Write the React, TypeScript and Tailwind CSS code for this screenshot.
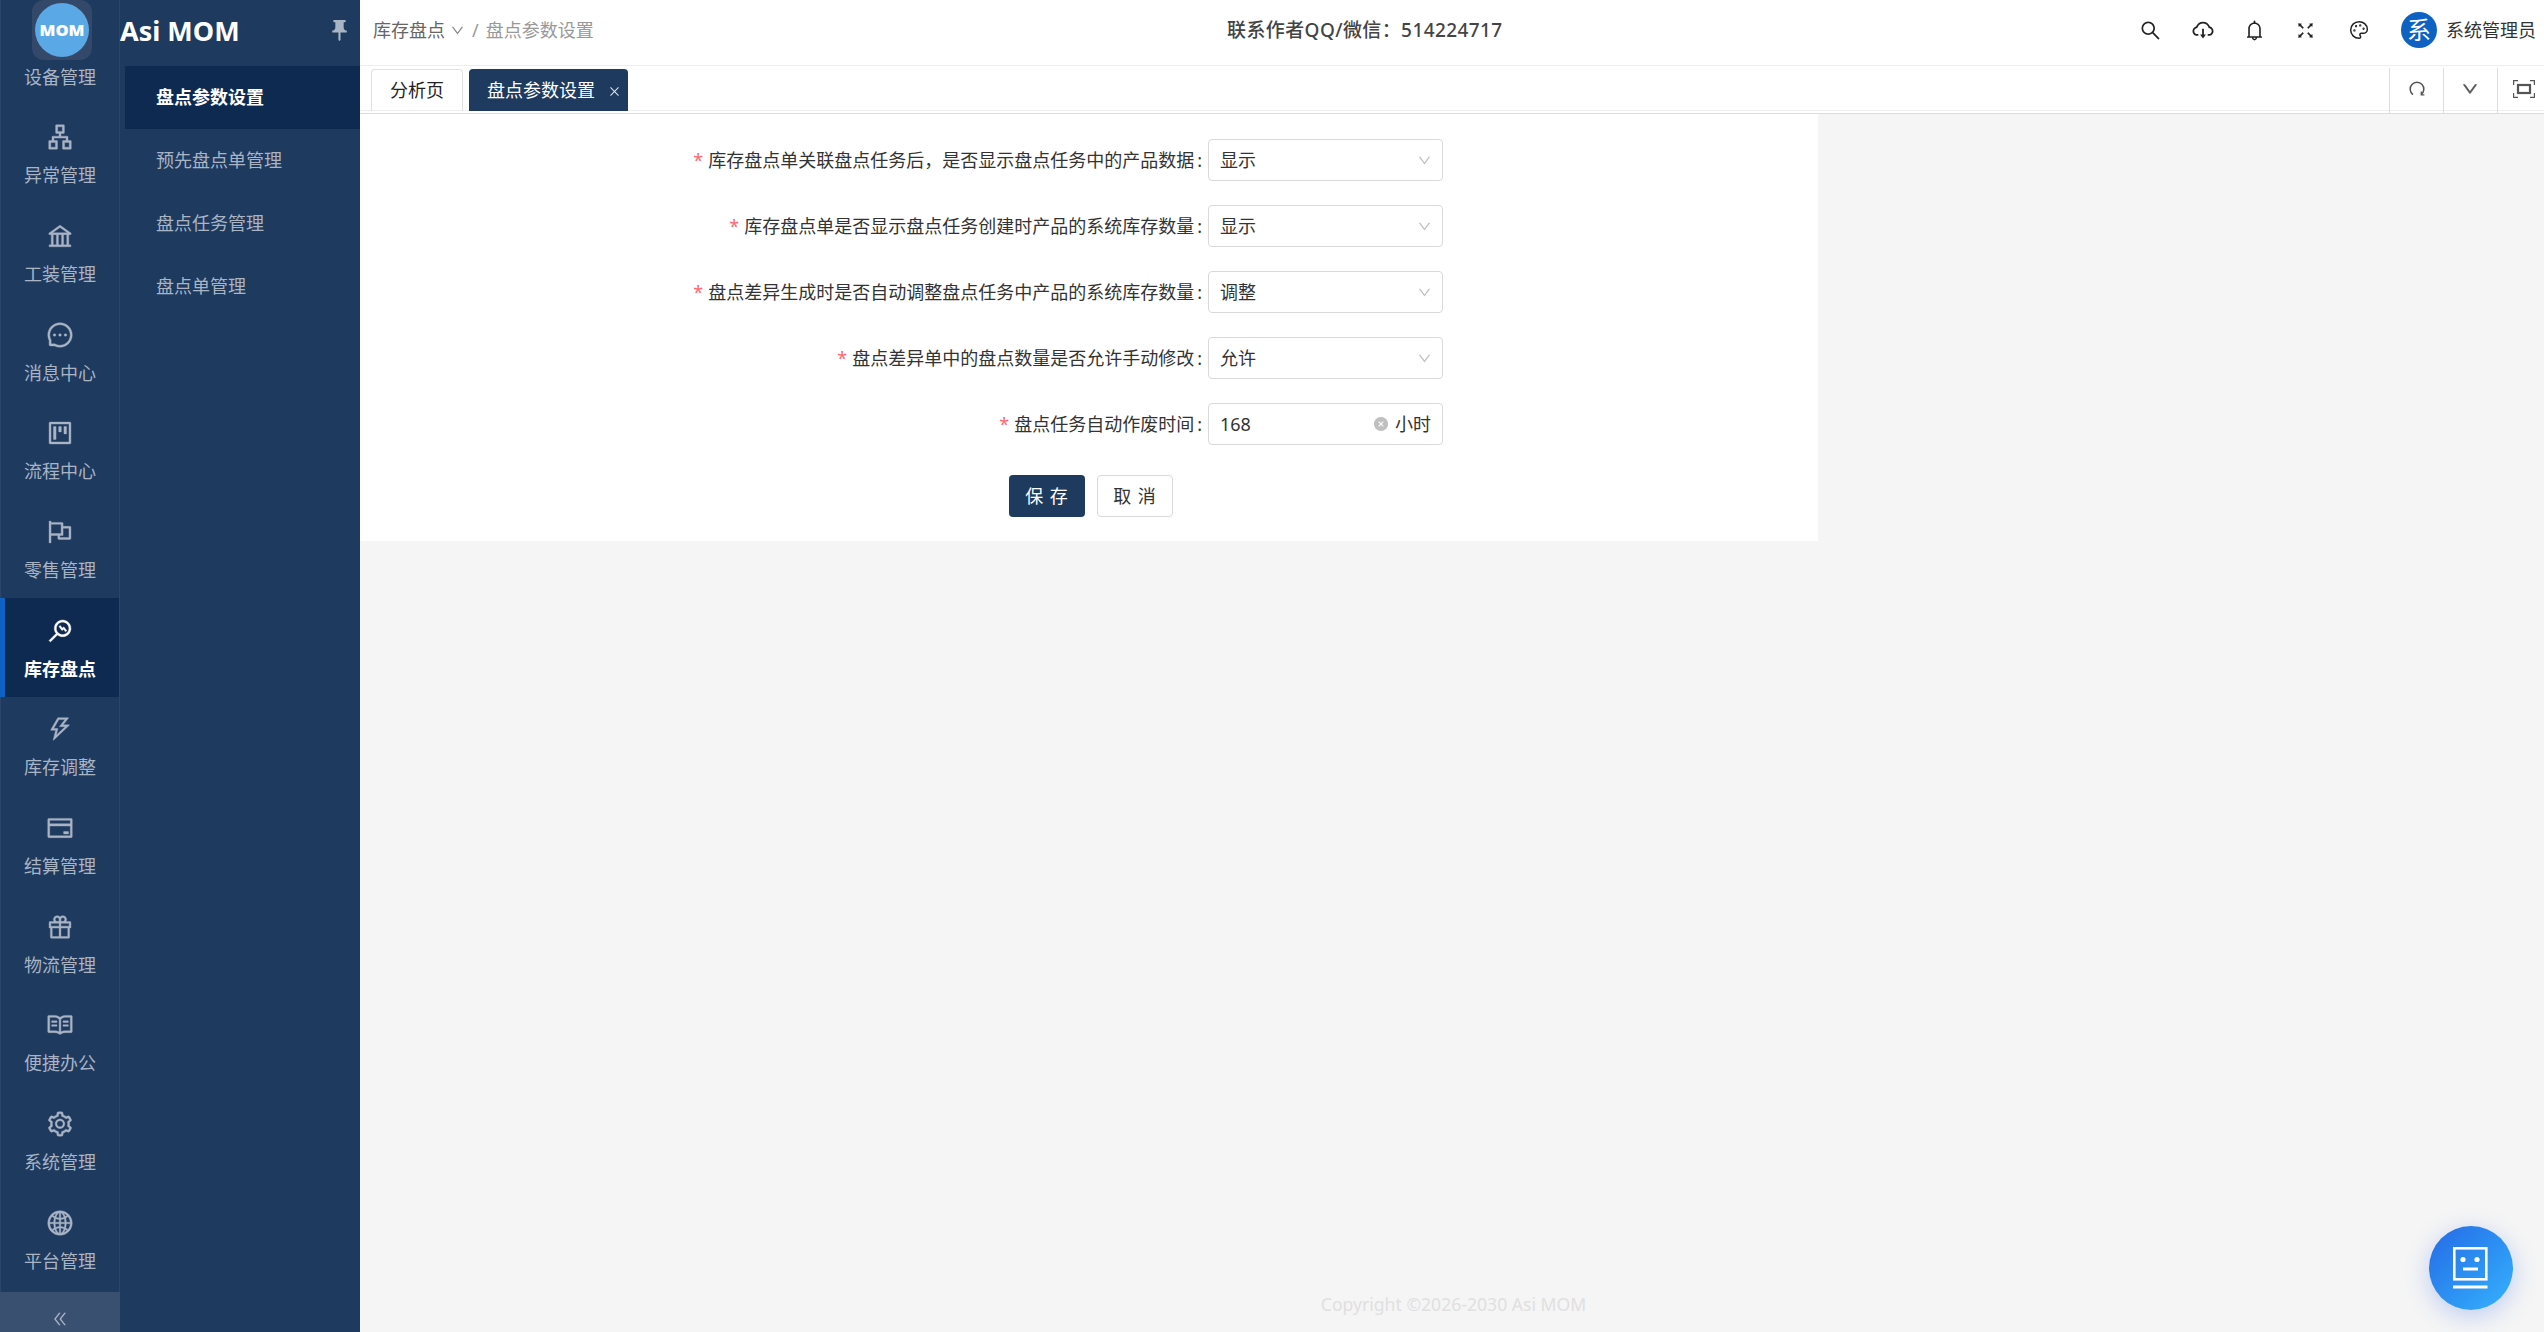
import { Palette } from 'lucide-react'
import {
  AiOutlineApartment,
  AiOutlineBank,
  AiOutlineBell,
  AiOutlineClose,
  AiOutlineCloudDownload,
  AiOutlineCreditCard,
  AiOutlineDoubleLeft,
  AiOutlineDown,
  AiOutlineFlag,
  AiOutlineFullscreen,
  AiOutlineGift,
  AiOutlineGlobal,
  AiOutlineMessage,
  AiOutlineMonitor,
  AiOutlineProject,
  AiOutlineRead,
  AiOutlineSearch,
  AiOutlineSetting,
  AiOutlineThunderbolt,
  AiFillCloseCircle,
} from 'react-icons/ai'
import { MdPushPin } from 'react-icons/md'

const RAIL = [
  { label: '设备管理', icon: null },
  { label: '异常管理', icon: AiOutlineApartment },
  { label: '工装管理', icon: AiOutlineBank },
  { label: '消息中心', icon: AiOutlineMessage },
  { label: '流程中心', icon: AiOutlineProject },
  { label: '零售管理', icon: AiOutlineFlag },
  { label: '库存盘点', icon: AiOutlineMonitor, active: true },
  { label: '库存调整', icon: AiOutlineThunderbolt },
  { label: '结算管理', icon: AiOutlineCreditCard },
  { label: '物流管理', icon: AiOutlineGift },
  { label: '便捷办公', icon: AiOutlineRead },
  { label: '系统管理', icon: AiOutlineSetting },
  { label: '平台管理', icon: AiOutlineGlobal },
]

const SUBMENU = ['盘点参数设置', '预先盘点单管理', '盘点任务管理', '盘点单管理']

const SELECTS = [
  { label: '库存盘点单关联盘点任务后，是否显示盘点任务中的产品数据', value: '显示' },
  { label: '库存盘点单是否显示盘点任务创建时产品的系统库存数量', value: '显示' },
  { label: '盘点差异生成时是否自动调整盘点任务中产品的系统库存数量', value: '调整' },
  { label: '盘点差异单中的盘点数量是否允许手动修改', value: '允许' },
]

function FormLabel({ text }: { text: string }) {
  return (
    <label className="w-[848px] flex items-center justify-end pr-[6px] text-[#333]">
      <span className="text-[#ff6670] mr-[5px]">*</span>
      {text}
      <span className="ml-[3px]">:</span>
    </label>
  )
}

function Rail() {
  return (
    <aside className="relative w-[120px] shrink-0 h-full flex flex-col bg-[#1e3a5f] border-l border-r border-[#2c466b] pt-[6px]">
      {RAIL.map(item => {
        const Icon = item.icon
        return (
          <div
            key={item.label}
            className={`relative h-[98.67px] shrink-0 flex flex-col items-center justify-end pb-[15px] ${
              item.active ? 'bg-[#0f2a50] text-white font-bold' : 'text-[#a9b4c4]'
            }`}
          >
            {item.active && <span className="absolute left-[-1px] top-0 bottom-0 w-[5px] bg-[#0d62c2]" />}
            {Icon && <Icon className="w-[28px] h-[28px] mb-[11px]" stroke="currentColor" strokeWidth={14} />}
            <span className="leading-[26px]">{item.label}</span>
          </div>
        )
      })}
      <div className="absolute left-[31px] top-0 w-[60px] h-[60px] rounded-[12px] bg-[#34496a] flex items-center justify-center">
        <div className="w-[54px] h-[54px] rounded-full bg-[#5aa9e6] flex items-center justify-center text-white text-[16.5px] font-black">
          MOM
        </div>
      </div>
      <div className="absolute left-[-1px] right-[-1px] bottom-0 h-[40px] pt-[14px] bg-[#3a5070] flex items-center justify-center text-[#a9b4c4]">
        <AiOutlineDoubleLeft className="w-[18px] h-[18px]" />
      </div>
    </aside>
  )
}

function SubMenu() {
  return (
    <aside className="w-[240px] shrink-0 h-full bg-[#1e3a5f] flex flex-col">
      <div className="h-[66px] shrink-0 flex items-center justify-between pb-[5px] pr-[8px]">
        <span className="text-[27px] font-bold text-white leading-none">Asi MOM</span>
        <MdPushPin className="w-[25px] h-[25px] text-[#a9b4c4]" />
      </div>
      <div className="pl-[5px]">
        {SUBMENU.map((name, i) => (
          <div
            key={name}
            className={`h-[63px] flex items-center pl-[31px] ${
              i === 0 ? 'bg-[#0f2a50] text-white font-bold' : 'text-[#a9b4c4]'
            }`}
          >
            {name}
          </div>
        ))}
      </div>
    </aside>
  )
}

function Header() {
  return (
    <header className="relative h-[66px] shrink-0 bg-white border-b border-[#eeeeee] flex items-center pb-[5px] pl-[13px]">
      <span className="text-[#666]">库存盘点</span>
      <AiOutlineDown className="w-[15px] h-[15px] text-[#888] ml-[5px]" />
      <span className="text-[#999] mx-[7px]">/</span>
      <span className="text-[#999]">盘点参数设置</span>
      <div className="absolute left-[867px] top-0 h-[60px] flex items-center font-medium text-[#444] text-[19px] tracking-[0.4px]">
        联系作者QQ/微信：514224717
      </div>
      <div className="ml-auto flex items-center text-[#222]">
        <AiOutlineSearch className="w-[23px] h-[23px]" />
        <AiOutlineCloudDownload className="w-[24px] h-[24px] ml-[29px]" />
        <AiOutlineBell className="w-[23px] h-[23px] ml-[28px]" />
        <AiOutlineFullscreen className="w-[21px] h-[21px] ml-[29px]" />
        <Palette className="w-[20px] h-[20px] ml-[33px]" strokeWidth={1.8} />
        <div className="ml-[32px] w-[36px] h-[36px] rounded-full bg-[#0d62c2] text-white text-[24px] flex items-center justify-center leading-none">
          系
        </div>
        <span className="ml-[9px] mr-[8px] text-[#333]">系统管理员</span>
      </div>
    </header>
  )
}

function TabBar() {
  return (
    <div className="relative h-[48px] shrink-0 bg-white border-b border-[#dcdcdc] flex">
      <span className="absolute left-0 right-0 top-[44px] h-px bg-[#eeeeee]" />
      <div className="relative flex items-start pt-[3px] pl-[11px]">
        <div className="w-[92px] h-[42px] rounded-t-[4px] border border-b-0 border-[#e0e0e0] flex items-center justify-center text-[#222] mr-[6px]">
          分析页
        </div>
        <div className="w-[159px] h-[42px] rounded-t-[4px] bg-[#1e3a5f] text-white flex items-center pl-[18px]">
          盘点参数设置
          <AiOutlineClose className="w-[13px] h-[13px] ml-[13px] mt-[3px] text-[#dfe4ea]" />
        </div>
      </div>
      <div className="relative ml-auto h-full pt-[2px] flex text-[#555]">
        <div className="w-[54px] h-full border-l border-[#dddddd] flex items-center justify-center pb-[4px]">
          <svg viewBox="0 0 20 20" className="w-[18px] h-[18px]" fill="none" stroke="currentColor" strokeWidth="1.7">
            <path d="M5.5 16.2A7.6 7.6 0 1 1 14.5 16.2" />
            <path d="M14.8 12.8v3.8h3.4" strokeWidth="1.4" />
          </svg>
        </div>
        <div className="w-[54px] h-full border-l border-[#dddddd] flex items-center justify-center pb-[4px] pr-[2px]">
          <AiOutlineDown className="w-[18px] h-[18px]" stroke="currentColor" strokeWidth={30} />
        </div>
        <div className="w-[47px] h-full border-l border-[#dddddd] flex items-center justify-center pb-[4px] pl-[5px]">
          <svg viewBox="0 0 22 18" className="w-[22px] h-[18px]" fill="none" stroke="currentColor" strokeWidth="1.2">
            <path d="M.6 5V.6h4.4M17 .6h4.4V5M.6 13v4.4h4.4M17 17.4h4.4V13" />
            <rect x="5" y="5" width="12" height="8" strokeWidth="2.2" />
          </svg>
        </div>
      </div>
    </div>
  )
}

function SettingsForm() {
  return (
    <form className="w-[1458px] h-[427px] bg-white pt-[25px]">
      {SELECTS.map(row => (
        <div key={row.label} className="flex items-center h-[42px] mb-[24px]">
          <FormLabel text={row.label} />
          <div className="w-[235px] h-[42px] rounded-[4px] border border-[#d9d9d9] flex items-center justify-between pl-[11px] pr-[10px] text-[#333]">
            {row.value}
            <AiOutlineDown className="w-[15px] h-[15px] text-[#bfbfbf]" />
          </div>
        </div>
      ))}
      <div className="flex items-center h-[42px] mb-[30px]">
        <FormLabel text="盘点任务自动作废时间" />
        <div className="w-[235px] h-[42px] rounded-[4px] border border-[#d9d9d9] flex items-center px-[11px] text-[#333]">
          168
          <AiFillCloseCircle className="w-[16px] h-[16px] text-[#bfbfbf] ml-auto mr-[6px]" />
          小时
        </div>
      </div>
      <div className="flex ml-[649px] gap-[12px]">
        <button type="button" className="w-[76px] h-[42px] rounded-[4px] bg-[#1e3a5f] text-white tracking-[1px]">
          保 存
        </button>
        <button type="button" className="w-[76px] h-[42px] rounded-[4px] border border-[#d9d9d9] bg-white text-[#333] tracking-[1px]">
          取 消
        </button>
      </div>
    </form>
  )
}

export default function App() {
  return (
    <div className="relative flex h-screen w-full overflow-hidden bg-[#f5f5f5] text-[18px] font-['Noto_Sans','Noto_Sans_CJK_SC',sans-serif]">
      <Rail />
      <SubMenu />
      <main className="flex-1 min-w-0 flex flex-col">
        <Header />
        <TabBar />
        <SettingsForm />
        <footer className="mt-auto h-[41px] flex items-start justify-center text-[#e0e0e0] text-[17.6px] ml-[3px]">
          Copyright ©2026-2030 Asi MOM
        </footer>
      </main>
      <div className="absolute right-[31px] bottom-[22px] w-[84px] h-[84px] rounded-full bg-gradient-to-br from-[#2769e6] to-[#37b2fd] shadow-[0_6px_24px_rgba(60,110,240,0.3)] flex items-center justify-center">
        <svg viewBox="0 0 36 42" className="w-[36px] h-[42px]" fill="none" stroke="white" strokeWidth="2.6">
          <rect x="1.3" y="1.3" width="32" height="31" />
          <path d="M10 22h15" strokeWidth="3" />
          <path d="M0 40h34.5" strokeWidth="3" />
          <circle cx="10" cy="12.5" r="2.6" fill="white" stroke="none" />
          <circle cx="24" cy="12.5" r="2.6" fill="white" stroke="none" />
        </svg>
      </div>
    </div>
  )
}
